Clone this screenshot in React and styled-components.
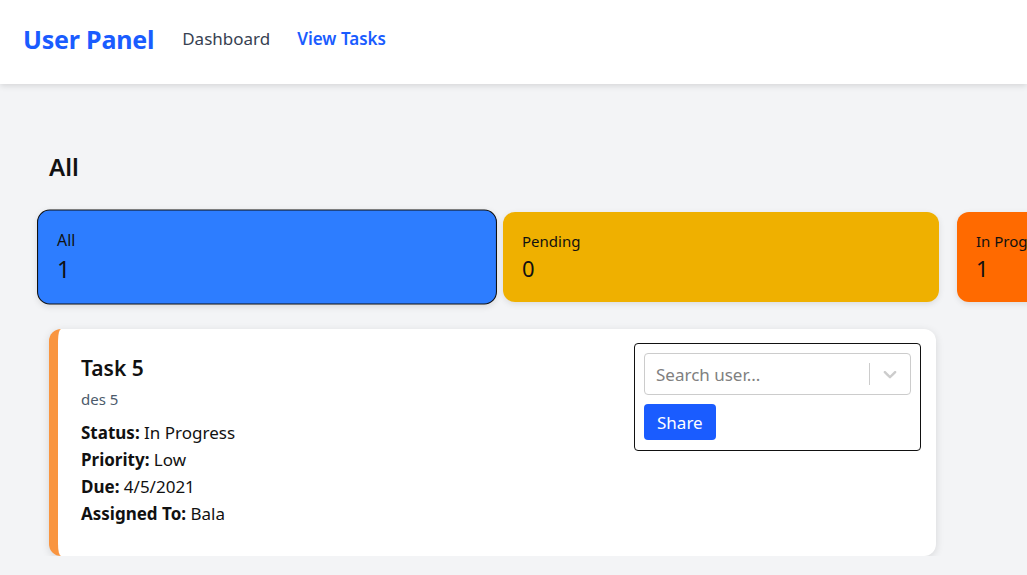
import React from "react";
import styled, { createGlobalStyle } from "styled-components";

const GlobalStyle = createGlobalStyle`
  * { box-sizing: border-box; }
  body {
    margin: 0;
    background: #f3f4f6;
    font-family: "Noto Sans", "Open Sans", sans-serif;
    color: #111;
    overflow: hidden;
  }
`;

const stats = [
  { label: "All", count: 1, color: "#2d7dff", active: true },
  { label: "Pending", count: 0, color: "#efb000" },
  { label: "In Progress", count: 1, color: "#ff6a00" },
  { label: "Completed", count: 0, color: "#22b35e" },
];

const Navbar = styled.nav`
  height: 84px;
  background: #fff;
  display: flex;
  align-items: center;
  gap: 28px;
  padding: 0 23px 7px;
  box-shadow: 0 2px 6px rgba(0, 0, 0, 0.12);
`;

const Brand = styled.h1`
  margin: 0;
  font-size: 25px;
  font-weight: 700;
  color: #1a5cff;
  letter-spacing: -0.2px;
`;

const NavLink = styled.a`
  font-size: 17px;
  color: ${({ $active }) => ($active ? "#1a5cff" : "#374151")};
  font-weight: ${({ $active }) => ($active ? 600 : 400)};
  text-decoration: none;
`;

const NavLinks = styled.div`
  display: flex;
  gap: 27px;
`;

const Main = styled.main`
  padding: 65px 0 0 49px;
`;

const Heading = styled.h2`
  margin: 0 0 27px;
  font-size: 24px;
  line-height: 36px;
  font-weight: 600;
`;

const StatRow = styled.div`
  display: flex;
  gap: 18px;
  width: max-content;
`;

const StatCard = styled.div`
  width: 436px;
  height: 90px;
  flex-shrink: 0;
  border-radius: 12px;
  padding: 17px 18px 0;
  background: ${({ $color }) => $color};
  border: 1px solid ${({ $active }) => ($active ? "#111" : "transparent")};
  transform: ${({ $active }) => ($active ? "scale(1.055)" : "none")};
  box-shadow: 0 2px 6px rgba(0, 0, 0, 0.1);
`;

const StatLabel = styled.div`
  font-size: 15px;
  line-height: 23px;
`;

const StatCount = styled.div`
  font-size: 22px;
  line-height: 30px;
`;

const TaskCard = styled.div`
  margin-top: 27px;
  width: 887px;
  background: #fff;
  border-left: 9px solid #f99540;
  border-radius: 12px;
  box-shadow: 0 2px 8px rgba(0, 0, 0, 0.12);
  display: flex;
  justify-content: space-between;
  align-items: flex-start;
  padding: 14px 15px 29px 23px;
`;

const TaskInfo = styled.div`
  padding-top: 9px;
`;

const TaskTitle = styled.h3`
  margin: 0 0 4px;
  font-size: 21px;
  line-height: 33px;
  font-weight: 600;
`;

const TaskDesc = styled.p`
  margin: 0 0 9px;
  font-size: 15px;
  line-height: 21px;
  color: #4b5a6b;
`;

const Field = styled.div`
  font-size: 17px;
  line-height: 27px;
  b { font-weight: 700; }
`;

const ShareBox = styled.div`
  width: 287px;
  border: 1px solid #111;
  border-radius: 4px;
  padding: 9px 9px 10px;
  display: flex;
  flex-direction: column;
  align-items: flex-start;
  gap: 9px;
`;

const Select = styled.div`
  width: 100%;
  height: 42px;
  border: 1px solid #ccc;
  border-radius: 4px;
  display: flex;
  align-items: center;
  padding-left: 11px;
  background: #fff;
`;

const Placeholder = styled.span`
  flex: 1;
  font-size: 17px;
  color: #808080;
`;

const Separator = styled.span`
  width: 1px;
  height: 22px;
  background: #ccc;
`;

const Indicator = styled.span`
  width: 40px;
  display: flex;
  justify-content: center;
  color: #ccc;
`;

const ShareButton = styled.button`
  background: #1a5cff;
  color: #fff;
  border: none;
  border-radius: 4px;
  font-family: inherit;
  font-size: 17px;
  height: 36px;
  padding: 0 13px;
`;

const Chevron = () => (
  <svg width="22" height="22" viewBox="0 0 20 20" fill="currentColor">
    <path d="M4.516 7.548c0.436-0.446 1.043-0.481 1.576 0l3.908 3.747 3.908-3.747c0.533-0.481 1.141-0.446 1.574 0 0.436 0.445 0.408 1.197 0 1.615-0.406 0.418-4.695 4.502-4.695 4.502-0.217 0.223-0.502 0.335-0.787 0.335s-0.57-0.112-0.789-0.335c0 0-4.287-4.084-4.695-4.502s-0.436-1.17 0-1.615z" />
  </svg>
);

export default function App() {
  return (
    <>
      <GlobalStyle />
      <Navbar>
        <Brand>User Panel</Brand>
        <NavLinks>
          <NavLink>Dashboard</NavLink>
          <NavLink $active>View Tasks</NavLink>
        </NavLinks>
      </Navbar>
      <Main>
        <Heading>All</Heading>
        <StatRow>
          {stats.map((s) => (
            <StatCard key={s.label} $color={s.color} $active={s.active}>
              <StatLabel>{s.label}</StatLabel>
              <StatCount>{s.count}</StatCount>
            </StatCard>
          ))}
        </StatRow>
        <TaskCard>
          <TaskInfo>
            <TaskTitle>Task 5</TaskTitle>
            <TaskDesc>des 5</TaskDesc>
            <Field><b>Status:</b> In Progress</Field>
            <Field><b>Priority:</b> Low</Field>
            <Field><b>Due:</b> 4/5/2021</Field>
            <Field><b>Assigned To:</b> Bala</Field>
          </TaskInfo>
          <ShareBox>
            <Select>
              <Placeholder>Search user...</Placeholder>
              <Separator />
              <Indicator><Chevron /></Indicator>
            </Select>
            <ShareButton>Share</ShareButton>
          </ShareBox>
        </TaskCard>
      </Main>
    </>
  );
}
